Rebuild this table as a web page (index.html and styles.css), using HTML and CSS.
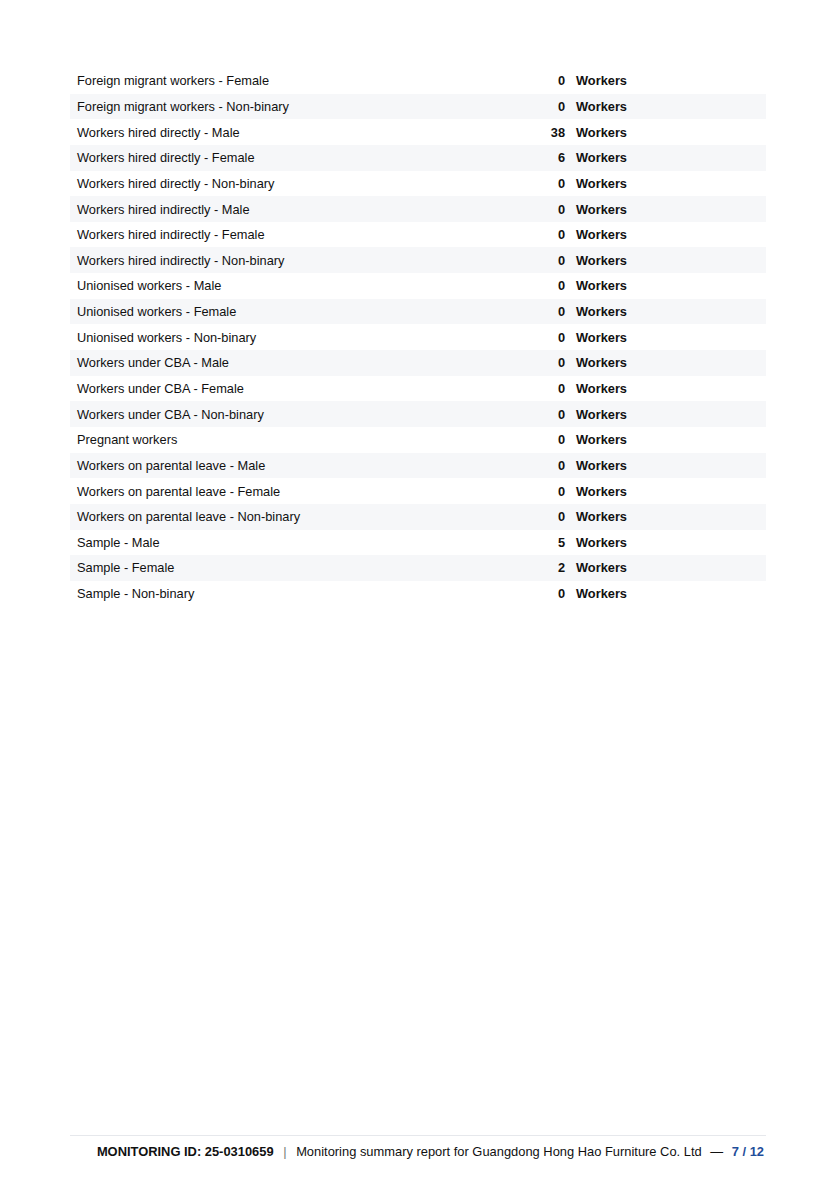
FILE: index.html
```html
<!DOCTYPE html>
<html>
<head>
  <title>Monitoring summary report</title>
  <link rel="stylesheet" href="styles.css">
</head>
<body>
<div class="page">
  <table class="facts">
    <tr><td class="label">Foreign migrant workers - Female</td><td class="num">0</td><td class="unit">Workers</td></tr>
    <tr><td class="label">Foreign migrant workers - Non-binary</td><td class="num">0</td><td class="unit">Workers</td></tr>
    <tr><td class="label">Workers hired directly - Male</td><td class="num">38</td><td class="unit">Workers</td></tr>
    <tr><td class="label">Workers hired directly - Female</td><td class="num">6</td><td class="unit">Workers</td></tr>
    <tr><td class="label">Workers hired directly - Non-binary</td><td class="num">0</td><td class="unit">Workers</td></tr>
    <tr><td class="label">Workers hired indirectly - Male</td><td class="num">0</td><td class="unit">Workers</td></tr>
    <tr><td class="label">Workers hired indirectly - Female</td><td class="num">0</td><td class="unit">Workers</td></tr>
    <tr><td class="label">Workers hired indirectly - Non-binary</td><td class="num">0</td><td class="unit">Workers</td></tr>
    <tr><td class="label">Unionised workers - Male</td><td class="num">0</td><td class="unit">Workers</td></tr>
    <tr><td class="label">Unionised workers - Female</td><td class="num">0</td><td class="unit">Workers</td></tr>
    <tr><td class="label">Unionised workers - Non-binary</td><td class="num">0</td><td class="unit">Workers</td></tr>
    <tr><td class="label">Workers under CBA - Male</td><td class="num">0</td><td class="unit">Workers</td></tr>
    <tr><td class="label">Workers under CBA - Female</td><td class="num">0</td><td class="unit">Workers</td></tr>
    <tr><td class="label">Workers under CBA - Non-binary</td><td class="num">0</td><td class="unit">Workers</td></tr>
    <tr><td class="label">Pregnant workers</td><td class="num">0</td><td class="unit">Workers</td></tr>
    <tr><td class="label">Workers on parental leave - Male</td><td class="num">0</td><td class="unit">Workers</td></tr>
    <tr><td class="label">Workers on parental leave - Female</td><td class="num">0</td><td class="unit">Workers</td></tr>
    <tr><td class="label">Workers on parental leave - Non-binary</td><td class="num">0</td><td class="unit">Workers</td></tr>
    <tr><td class="label">Sample - Male</td><td class="num">5</td><td class="unit">Workers</td></tr>
    <tr><td class="label">Sample - Female</td><td class="num">2</td><td class="unit">Workers</td></tr>
    <tr><td class="label">Sample - Non-binary</td><td class="num">0</td><td class="unit">Workers</td></tr>
  </table>

  <div class="footer">
    <b>MONITORING ID: 25-0310659</b>
    <span class="sep">|</span>
    Monitoring summary report for Guangdong Hong Hao Furniture Co. Ltd
    <span class="dash">&mdash;</span>
    <span class="pageno">7 / 12</span>
  </div>
</div>
</body>
</html>
```

FILE: styles.css
```css
body {
    margin: 0;
    font-family: "Liberation Sans", Arial, Helvetica, sans-serif;
    color: #111;
}

.page {
    min-height: 1180px;
    box-sizing: border-box;
    padding: 68px 60px 0 70px;
    display: flex;
    flex-direction: column;
}

table.facts {
    width: 100%;
    border-collapse: collapse;
    font-size: 12.8px;
}

table.facts td {
    height: 25.65px;
    padding: 0;
    vertical-align: middle;
}

table.facts tr:nth-child(even) td {
    background: #f6f7f9;
}

td.label {
    padding-left: 7px !important;
}

td.num {
    width: 60px;
    text-align: right;
    font-weight: bold;
    padding-right: 11px !important;
}

td.unit {
    width: 190px;
    font-weight: bold;
}

.footer {
    margin-top: auto;
    margin-bottom: 21px;
    border-top: 1px solid #e6e8ec;
    padding-top: 8px;
    text-align: right;
    font-size: 12.9px;
    padding-right: 2px;
}

.footer .sep {
    color: #777;
    margin: 0 6px;
}

.footer .dash {
    margin: 0 5px;
}

.footer .pageno {
    color: #1f4e9a;
    font-weight: bold;
}
```
